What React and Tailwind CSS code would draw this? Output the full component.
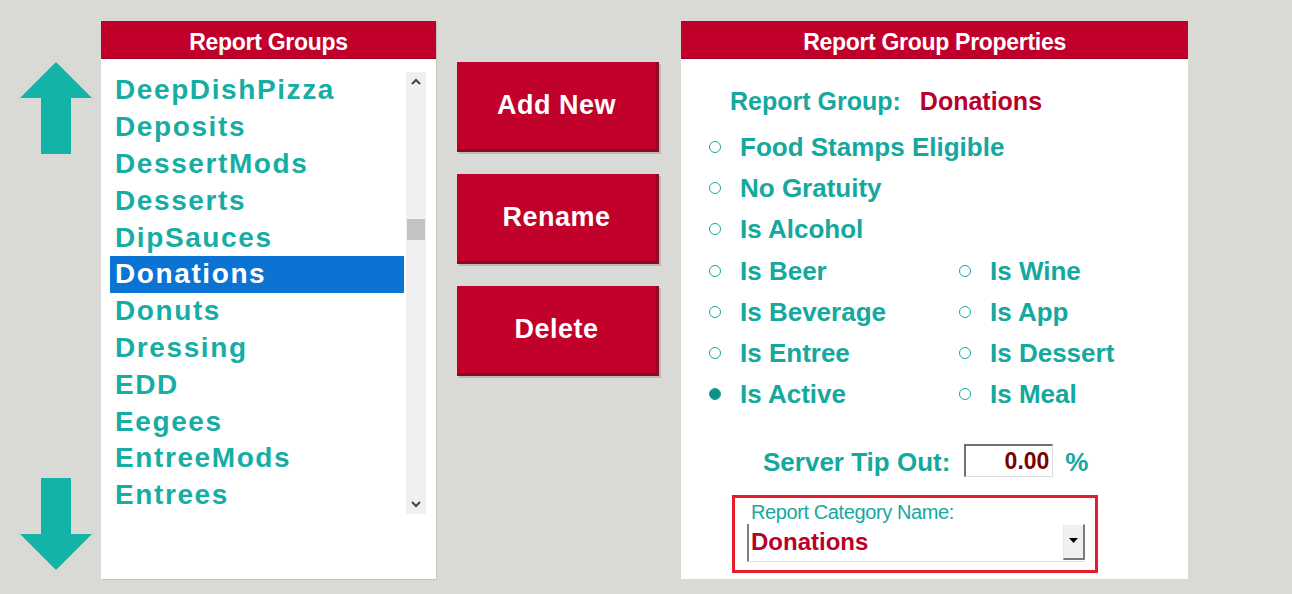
import React from 'react';

const GROUPS = [
  'DeepDishPizza', 'Deposits', 'DessertMods', 'Desserts', 'DipSauces', 'Donations',
  'Donuts', 'Dressing', 'EDD', 'Eegees', 'EntreeMods', 'Entrees',
];

const FLAGS = [
  [{ label: 'Food Stamps Eligible' }],
  [{ label: 'No Gratuity' }],
  [{ label: 'Is Alcohol' }],
  [{ label: 'Is Beer' }, { label: 'Is Wine' }],
  [{ label: 'Is Beverage' }, { label: 'Is App' }],
  [{ label: 'Is Entree' }, { label: 'Is Dessert' }],
  [{ label: 'Is Active', on: true }, { label: 'Is Meal' }],
];

const font = "font-['Liberation_Sans',Arial,sans-serif]";

const Arrow = ({ down }) => (
  <svg width="72" height="92" viewBox="0 0 72 92" className={down ? 'rotate-180' : ''}>
    <path d="M36 0 L72 36 L51 36 L51 92 L21 92 L21 36 L0 36 Z" fill="#14b3a8" />
  </svg>
);

const Radio = ({ label, on }) => (
  <div className="flex items-center h-[41.2px]">
    <span className={`w-[12px] h-[12px] rounded-full border-[1.5px] border-[#14a89e] ${on ? 'bg-[#0f8f86] border-[#0f8f86]' : 'bg-white'}`} />
    <span className="ml-[19px] text-[26px] font-bold text-[#14a89e] leading-none">{label}</span>
  </div>
);

const Header = ({ children }) => (
  <div className="h-[38px] pt-[5px] bg-[#c0002b] border-b border-[#9a0020] flex items-center justify-center text-white text-[23px] font-bold tracking-[-0.3px]">
    {children}
  </div>
);

const Button = ({ children }) => (
  <button className="h-[90px] w-[202px] bg-[#c1002b] border-r-[3px] border-b-[3px] border-[#8d0a22] text-white text-[27px] font-bold tracking-[0.5px] shadow-[2px_2px_0_#b9b9b5]">
    {children}
  </button>
);

export default function App() {
  return (
    <div className={`w-[1292px] h-[594px] bg-[#d9dad6] flex items-start pt-[21px] pl-[20px] ${font}`}>
      {/* scroll arrows */}
      <div className="w-[72px] h-[558px] flex flex-col justify-between pt-[41px] pb-[9px]">
        <Arrow />
        <Arrow down />
      </div>

      {/* report groups list */}
      <div className="ml-[9px] w-[335px] h-[558px] bg-white shadow-[1px_1px_0_#c4c5c1]">
        <Header>Report Groups</Header>
        <div className="mt-[13px] ml-[9px] w-[316px] flex">
          <div className="w-[294px]">
            {GROUPS.map((g) => (
              <div
                key={g}
                className={`h-[36.8px] flex items-center pl-[5px] text-[28px] font-bold tracking-[1.6px] leading-none ${g === 'Donations' ? 'bg-[#0b74d3] text-white' : 'text-[#16ada4]'}`}
              >
                {g}
              </div>
            ))}
          </div>
          <div className="ml-[2px] w-[20px] h-[441.6px] bg-[#f0f0f0] flex flex-col items-center pt-[6px] pb-[6px]">
            <svg width="10" height="8" viewBox="0 0 10 8"><path d="M1 6 L5 2 L9 6" stroke="#444" strokeWidth="2" fill="none" /></svg>
            <div className="mt-[133px] w-[18px] h-[21px] bg-[#c3c3c3]" />
            <div className="flex-1" />
            <svg width="10" height="8" viewBox="0 0 10 8"><path d="M1 2 L5 6 L9 2" stroke="#444" strokeWidth="2" fill="none" /></svg>
          </div>
        </div>
      </div>

      {/* action buttons */}
      <div className="ml-[21px] pt-[41px] flex flex-col gap-[22px]">
        <Button>Add New</Button>
        <Button>Rename</Button>
        <Button>Delete</Button>
      </div>

      {/* properties */}
      <div className="ml-[22px] w-[507px] h-[558px] bg-white">
        <Header>Report Group Properties</Header>
        <div className="mt-[28px] pl-[49px] h-[30px] flex items-center text-[25px] font-bold">
          <span className="text-[#14a89e]">Report Group:</span>
          <span className="ml-[19px] text-[#b9002c]">Donations</span>
        </div>
        <div className="mt-[9.5px] pl-[28px] grid grid-cols-[250px_1fr]">
          {FLAGS.map((row, i) =>
            row.length === 1 ? (
              <div key={i} className="col-span-2"><Radio {...row[0]} /></div>
            ) : (
              <React.Fragment key={i}>
                <Radio {...row[0]} />
                <Radio {...row[1]} />
              </React.Fragment>
            )
          )}
        </div>
        <div className="mt-[24px] pl-[82px] flex items-center">
          <span className="text-[26px] font-bold text-[#14a89e] leading-none mt-[4px]">Server Tip Out:</span>
          <div className="ml-[14px] w-[89px] h-[33px] border-t-2 border-l-2 border-[#707070] border-r border-b border-r-[#dcdcdc] border-b-[#dcdcdc] flex items-center justify-end pr-[3px] text-[23px] font-bold text-[#7a0000]">
            0.00
          </div>
          <span className="ml-[12px] text-[26px] font-bold text-[#14a89e] mt-[4px]">%</span>
        </div>
        <div className="mt-[13px] ml-[51px] w-[366px] h-[78px] border-[3px] border-[#e41d2c] pl-[12px]">
          <div className="pl-[4px] mt-[3px] text-[20px] leading-[22px] text-[#14a89e] tracking-[-0.4px]">Report Category Name:</div>
          <div className="mt-[1px] w-[338px] h-[38px] flex border-l-2 border-[#808080] border-b border-b-[#e0e0e0]">
            <div className="flex-1 flex items-center pl-[2px] text-[24px] font-bold text-[#b9002c]">Donations</div>
            <div className="w-[22px] h-[36px] bg-[#f0f0f0] border-r-2 border-b-2 border-[#7a7a7a] border-l border-t border-l-[#e8e8e8] border-t-white flex items-center justify-center">
              <svg width="9" height="6" viewBox="0 0 9 6"><path d="M0 0 H9 L4.5 5 Z" fill="#000" /></svg>
            </div>
          </div>
        </div>
      </div>
    </div>
  );
}
